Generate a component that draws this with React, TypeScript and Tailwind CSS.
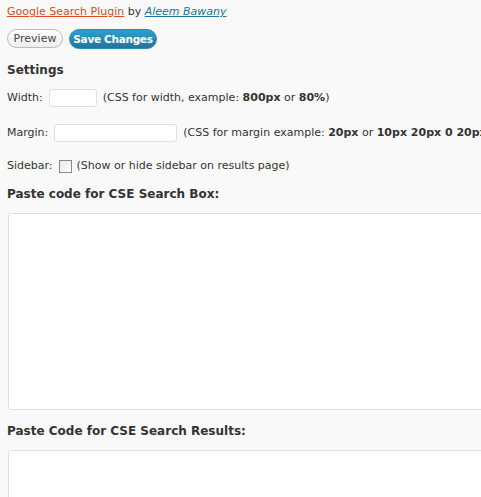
import React from 'react';

const App: React.FC = () => {
  return (
    <div className="min-h-screen w-[481px] overflow-hidden bg-[#f9f9f9] pl-[7px] pt-[5px] text-[11px] text-[#333] font-['DejaVu_Sans',Verdana,sans-serif]">
      {/* Plugin credit */}
      <div className="leading-[14px]">
        <a href="#" className="text-[#d54e21] underline">Google Search Plugin</a>
        {' '}by{' '}
        <a href="#" className="italic text-[#21759b] underline">Aleem Bawany</a>
      </div>

      {/* Buttons */}
      <div className="mt-[10px] flex gap-[6px]">
        <button className="h-[19px] w-[56px] whitespace-nowrap rounded-full border border-[#bbb] bg-gradient-to-b from-white to-[#eee] text-[11px] leading-none text-[#464646]">
          Preview
        </button>
        <button className="h-[20px] w-[88px] whitespace-nowrap rounded-full border border-[#298cba] bg-gradient-to-b from-[#2e9fd2] to-[#21759b] text-[10.5px] font-bold leading-none tracking-[-0.3px] text-white">
          Save Changes
        </button>
      </div>

      <h3 className="mt-[13px] text-[12px] font-bold leading-[16px] text-[#333]">Settings</h3>

      {/* Width */}
      <div className="mt-[11px] flex h-[18px] items-center">
        <span>Width:</span>
        <input className="ml-[6px] h-[18px] w-[48px] rounded-[3px] border border-[#dfdfdf] bg-white" />
        <span className="ml-[6px]">
          (CSS for width, example: <b>800px</b> or <b>80%</b>)
        </span>
      </div>

      {/* Margin */}
      <div className="mt-[17px] flex h-[18px] items-center whitespace-nowrap">
        <span>Margin:</span>
        <input className="ml-[6px] h-[18px] w-[123px] shrink-0 rounded-[3px] border border-[#dfdfdf] bg-white" />
        <span className="ml-[6px]">
          (CSS for margin example: <b>20px</b> or <b>10px 20px 0 20px</b>)
        </span>
      </div>

      {/* Sidebar */}
      <div className="mt-[17px] flex h-[14px] items-center">
        <span>Sidebar:</span>
        <span className="ml-[6px] h-[13px] w-[13px] border border-[#888] bg-gradient-to-br from-[#e8e8e8] to-white" />
        <span className="ml-[5px]">(Show or hide sidebar on results page)</span>
      </div>

      <h3 className="mt-[13px] text-[12px] font-bold leading-[16px]">Paste code for CSE Search Box:</h3>
      <textarea className="mt-[11px] ml-px block h-[197px] w-[490px] resize-none rounded-[3px] border border-[#dfdfdf] bg-white" />

      <h3 className="mt-[13px] text-[12px] font-bold leading-[16px]">Paste Code for CSE Search Results:</h3>
      <textarea className="mt-[11px] ml-px block h-[100px] w-[490px] resize-none rounded-[3px] border border-[#dfdfdf] bg-white" />
    </div>
  );
};

export default App;
